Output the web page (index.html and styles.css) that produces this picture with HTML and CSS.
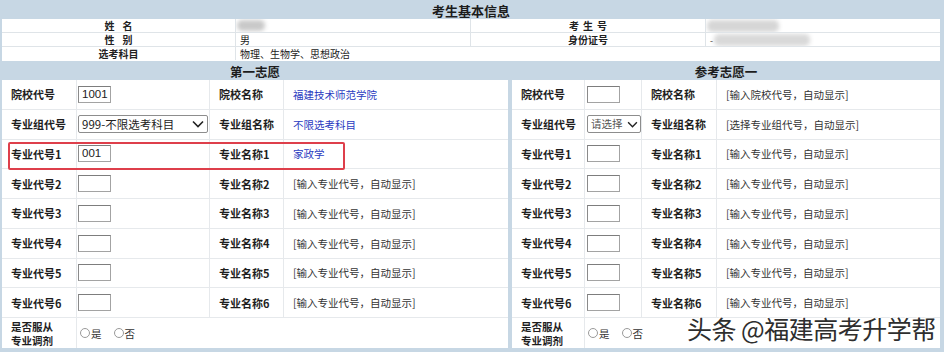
FILE: index.html
```html
<!DOCTYPE html>
<html lang="zh-CN">
<head>
<meta charset="utf-8">
<title>考生基本信息</title>
<link rel="stylesheet" href="styles.css">
</head>
<body>
<div class="page">
  <div class="basic">
    <div class="b-title">考生基本信息</div>
    <div class="b-row">
      <div class="b-cell b-label">姓<span class="g8"></span>名</div>
      <div class="b-cell b-val"><span class="blur blur-name"></span></div>
      <div class="b-cell b-label">考<span class="g4"></span>生<span class="g4"></span>号</div>
      <div class="b-cell b-val"><span class="blur blur-no"></span></div>
    </div>
    <div class="b-row">
      <div class="b-cell b-label">性<span class="g8"></span>别</div>
      <div class="b-cell b-val">男</div>
      <div class="b-cell b-label">身份证号</div>
      <div class="b-cell b-val"><span class="dash">-</span><span class="blur blur-id"></span></div>
    </div>
    <div class="b-row b-last">
      <div class="b-cell b-label">选考科目</div>
      <div class="b-cell b-val b-wide">物理、生物学、思想政治</div>
    </div>
  </div>

  <div class="panels">
    <div class="panel panel-first">
      <div class="p-title">第一志愿</div>

      <div class="c lab">院校代号</div>
      <div class="c ctl"><span class="inp">1001</span></div>
      <div class="c lab">院校名称</div>
      <div class="c val link">福建技术师范学院</div>

      <div class="c lab">专业组代号</div>
      <div class="c ctl"><span class="sel sel-wide"><span class="sel-txt">999-不限选考科目</span><svg class="chev" viewBox="0 0 12 8" width="12" height="8"><path d="M1 1.5 L6 6.5 L11 1.5" fill="none" stroke="#222" stroke-width="1.6"/></svg></span></div>
      <div class="c lab">专业组名称</div>
      <div class="c val link">不限选考科目</div>

      <div class="c lab">专业代号1</div>
      <div class="c ctl"><span class="inp">001</span></div>
      <div class="c lab">专业名称1</div>
      <div class="c val link">家政学</div>

      <div class="c lab">专业代号2</div>
      <div class="c ctl"><span class="inp"></span></div>
      <div class="c lab">专业名称2</div>
      <div class="c val">[输入专业代号，自动显示]</div>

      <div class="c lab">专业代号3</div>
      <div class="c ctl"><span class="inp"></span></div>
      <div class="c lab">专业名称3</div>
      <div class="c val">[输入专业代号，自动显示]</div>

      <div class="c lab">专业代号4</div>
      <div class="c ctl"><span class="inp"></span></div>
      <div class="c lab">专业名称4</div>
      <div class="c val">[输入专业代号，自动显示]</div>

      <div class="c lab">专业代号5</div>
      <div class="c ctl"><span class="inp"></span></div>
      <div class="c lab">专业名称5</div>
      <div class="c val">[输入专业代号，自动显示]</div>

      <div class="c lab">专业代号6</div>
      <div class="c ctl"><span class="inp"></span></div>
      <div class="c lab">专业名称6</div>
      <div class="c val">[输入专业代号，自动显示]</div>

      <div class="c lab lab2"><span>是否服从</span><span>专业调剂</span></div>
      <div class="c radios"><span class="radio"></span>是<span class="radio r2"></span>否</div>

      <div class="hl"></div>
    </div>

    <div class="panel panel-ref">
      <div class="p-title">参考志愿一</div>

      <div class="c lab">院校代号</div>
      <div class="c ctl"><span class="inp inp-r"></span></div>
      <div class="c lab">院校名称</div>
      <div class="c val">[输入院校代号，自动显示]</div>

      <div class="c lab">专业组代号</div>
      <div class="c ctl"><span class="sel sel-small"><span class="sel-txt sel-ph">请选择</span><svg class="chev" viewBox="0 0 12 8" width="11" height="7"><path d="M1 1.5 L6 6.5 L11 1.5" fill="none" stroke="#222" stroke-width="1.6"/></svg></span></div>
      <div class="c lab">专业组名称</div>
      <div class="c val">[选择专业组代号，自动显示]</div>

      <div class="c lab">专业代号1</div>
      <div class="c ctl"><span class="inp inp-r"></span></div>
      <div class="c lab">专业名称1</div>
      <div class="c val">[输入专业代号，自动显示]</div>

      <div class="c lab">专业代号2</div>
      <div class="c ctl"><span class="inp inp-r"></span></div>
      <div class="c lab">专业名称2</div>
      <div class="c val">[输入专业代号，自动显示]</div>

      <div class="c lab">专业代号3</div>
      <div class="c ctl"><span class="inp inp-r"></span></div>
      <div class="c lab">专业名称3</div>
      <div class="c val">[输入专业代号，自动显示]</div>

      <div class="c lab">专业代号4</div>
      <div class="c ctl"><span class="inp inp-r"></span></div>
      <div class="c lab">专业名称4</div>
      <div class="c val">[输入专业代号，自动显示]</div>

      <div class="c lab">专业代号5</div>
      <div class="c ctl"><span class="inp inp-r"></span></div>
      <div class="c lab">专业名称5</div>
      <div class="c val">[输入专业代号，自动显示]</div>

      <div class="c lab">专业代号6</div>
      <div class="c ctl"><span class="inp inp-r"></span></div>
      <div class="c lab">专业名称6</div>
      <div class="c val">[输入专业代号，自动显示]</div>

      <div class="c lab lab2"><span>是否服从</span><span>专业调剂</span></div>
      <div class="c radios"><span class="radio"></span>是<span class="radio r2"></span>否</div>
    </div>
  </div>

  <div class="watermark">头条 @福建高考升学帮</div>
</div>
</body>
</html>
```

FILE: styles.css
```css
html, body {
  margin: 0;
  padding: 0;
}
body {
  background: #c7d7e4;
  font-family: "Noto Sans CJK SC", "Liberation Sans", sans-serif;
  color: #222;
}
.page {
  position: relative;
  width: 944px;
  height: 352px;
  box-sizing: border-box;
  padding: 2px 4px 0 2px;
  background: #c7d7e4;
  overflow: hidden;
}

/* ---------- basic info ---------- */
.basic {
  width: 938px;
}
.b-title {
  height: 17px;
  line-height: 17px;
  text-align: center;
  font-weight: bold;
  font-size: 13px;
  color: #1c1c1c;
}
.b-row {
  display: grid;
  grid-template-columns: 234px 235px 235px 234px;
  height: 14px;
  background: #fff;
  box-sizing: border-box;
  border-bottom: 1px solid #dfe4e8;
}
.b-last {
  border-bottom: none;
}
.b-cell {
  box-sizing: border-box;
  height: 13px;
  line-height: 13px;
  font-size: 10px;
  border-right: 1px solid #dfe4e8;
  overflow: hidden;
  white-space: nowrap;
}
.b-cell:last-child {
  border-right: none;
}
.b-label {
  text-align: center;
  font-weight: bold;
}
.b-val {
  padding-left: 4px;
}
.b-wide {
  grid-column: 2 / 5;
}
.g8 { display: inline-block; width: 8px; }
.g4 { display: inline-block; width: 4px; }
.blur {
  display: inline-block;
  vertical-align: top;
  background: #cfcfcf;
  filter: blur(2px);
  border-radius: 5px;
  margin-top: 1px;
}
.blur-name { width: 28px; height: 11px; margin-left: -3px; background: #c9c9c9; }
.blur-no { width: 72px; height: 12px; margin-left: -3px; background: #d6d6d6; }
.blur-id { width: 96px; height: 12px; margin-left: 1px; background: #d9d9d9; }
.dash { font-size: 9px; color: #333; }

/* ---------- panels ---------- */
.panels {
  display: flex;
  gap: 4px;
  margin-top: 3px;
}
.panel {
  position: relative;
  display: grid;
  height: 284px;
  grid-template-rows: 16px repeat(8, 29.75px) 1fr;
  background: #fff;
}
.panel-first {
  width: 506px;
  grid-template-columns: 75px 133px 74px 224px;
}
.panel-ref {
  width: 428px;
  grid-template-columns: 73px 57px 75px 223px;
}
.p-title {
  grid-column: 1 / 5;
  background: #c7d7e4;
  text-align: center;
  font-weight: bold;
  font-size: 12.5px;
  line-height: 16px;
  color: #1c1c1c;
}
.c {
  box-sizing: border-box;
  display: flex;
  align-items: center;
  border-right: 1px solid #e6e9ec;
  border-bottom: 1px solid #e6e9ec;
  white-space: nowrap;
  overflow: hidden;
}
.c:nth-child(4n+1) {
  border-right: none;
}
.lab {
  padding-left: 9px;
  font-weight: bold;
  font-size: 11px;
  color: #1e1e1e;
}
.lab2 {
  flex-direction: column;
  align-items: flex-start;
  justify-content: center;
  gap: 1px;
  font-size: 10.5px;
  line-height: 13px;
  border-bottom: none;
  border-right: 1px solid #e6e9ec;
}
.ctl {
  padding-left: 1px;
}
.val {
  padding-left: 9px;
  font-size: 10.5px;
  color: #333;
}
.link {
  color: #2a3bbf;
}
.inp {
  box-sizing: border-box;
  display: inline-block;
  width: 33px;
  height: 17px;
  border: 1px solid #a3a3a3;
  border-top-color: #7d7d7d;
  border-left-color: #8a8a8a;
  font-family: "Liberation Sans", Arial, sans-serif;
  font-size: 11.5px;
  line-height: 15px;
  padding-left: 3px;
  color: #222;
  background: #fff;
}
.inp-r {
  width: 33px;
  margin-left: 1px;
}
.sel {
  box-sizing: border-box;
  display: inline-flex;
  align-items: center;
  justify-content: space-between;
  height: 18px;
  border: 1px solid #8d8d8d;
  border-radius: 2px;
  padding: 0 3px 0 3px;
  background: #fff;
}
.sel-wide {
  width: 130px;
}
.sel-small {
  width: 54px;
  margin-left: 1px;
  padding: 0 2px 0 3px;
}
.sel-txt {
  font-size: 11.5px;
  color: #222;
  line-height: 16px;
}
.sel-ph {
  color: #555;
  font-size: 10.5px;
}
.chev {
  display: block;
  flex: none;
}
.radios {
  grid-column: 2 / 5;
  border-right: none;
  border-bottom: none;
  padding-left: 3px;
  font-size: 10.5px;
  color: #333;
}
.radio {
  box-sizing: border-box;
  display: inline-block;
  width: 10px;
  height: 10px;
  border: 1px solid #9a9a9a;
  border-radius: 50%;
  margin-right: 1px;
}
.radio.r2 {
  margin-left: 12px;
}

/* highlight box (overlay) */
.hl {
  position: absolute;
  left: 6px;
  top: 78px;
  width: 337px;
  height: 28px;
  box-sizing: border-box;
  border: 2px solid #de3f4b;
  border-radius: 2px;
  pointer-events: none;
}

/* watermark (overlay) */
.watermark {
  position: absolute;
  left: 687px;
  top: 314px;
  font-family: "Noto Sans CJK SC", sans-serif;
  font-size: 25px;
  line-height: 28px;
  color: #2e2e2e;
  white-space: nowrap;
  text-shadow: 0 0 2px #fff, 0 0 2px #fff, 1px 1px 1px #fff, -1px -1px 1px #fff;
  letter-spacing: -0.5px;
}
```
